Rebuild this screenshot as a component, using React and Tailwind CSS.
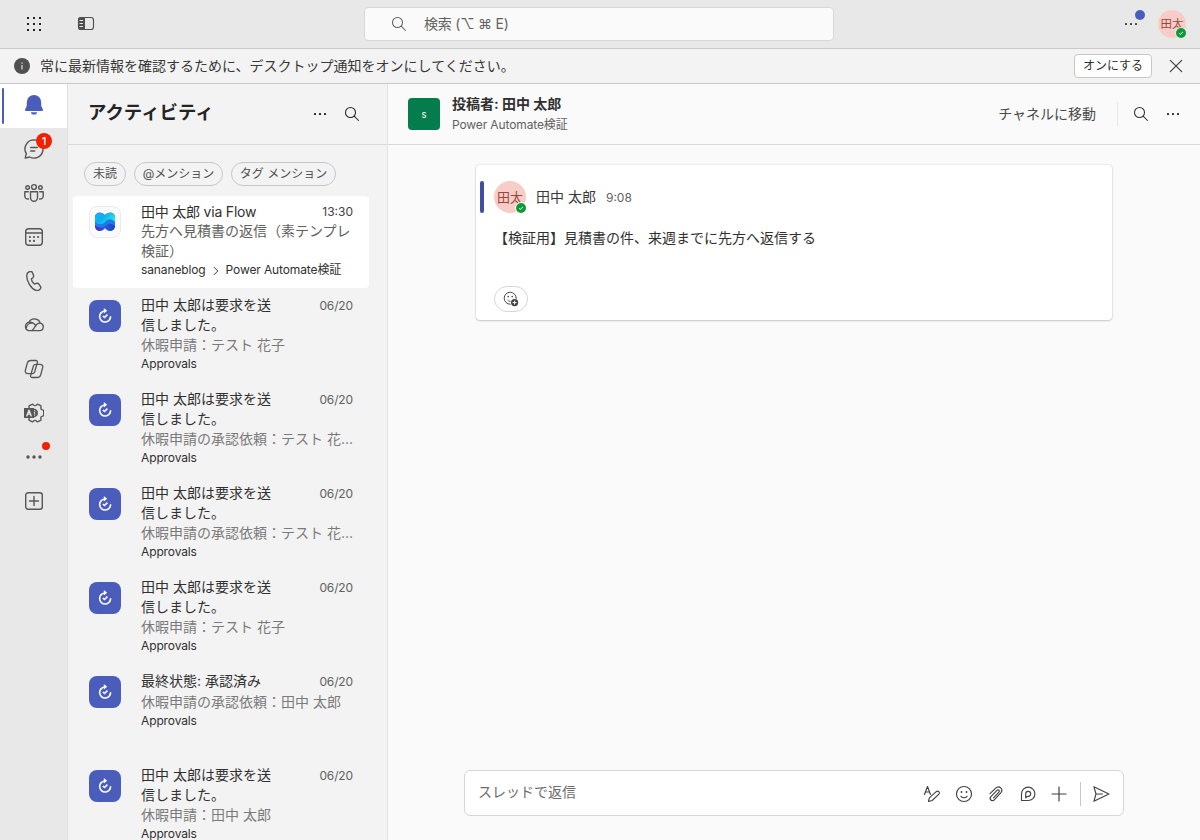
import React from "react";

const items = [
  { title: "田中 太郎は要求を送信しました。", preview: "休暇申請：テスト 花子" },
  { title: "田中 太郎は要求を送信しました。", preview: "休暇申請の承認依頼：テスト 花..." },
  { title: "田中 太郎は要求を送信しました。", preview: "休暇申請の承認依頼：テスト 花..." },
  { title: "田中 太郎は要求を送信しました。", preview: "休暇申請：テスト 花子" },
  { title: "最終状態: 承認済み", preview: "休暇申請の承認依頼：田中 太郎" },
  { title: "田中 太郎は要求を送信しました。", preview: "休暇申請：田中 太郎" },
];

// Line icon on a 20 unit grid
function Icon({ children, className = "h-5 w-5", width = 1.15 }) {
  return (
    <svg
      viewBox="0 0 20 20"
      className={`shrink-0 ${className}`}
      fill="none"
      stroke="currentColor"
      strokeWidth={width}
      strokeLinecap="round"
      strokeLinejoin="round"
    >
      {children}
    </svg>
  );
}

function SearchIcon({ className }) {
  return (
    <Icon className={className} width={1.05}>
      <circle cx="8.5" cy="8.5" r="5" />
      <path d="M12.2 12.2l4.3 4.3" />
    </Icon>
  );
}

function Dots({ className }) {
  return (
    <svg viewBox="0 0 20 20" className={`h-5 w-5 shrink-0 ${className || ""}`} fill="currentColor">
      <rect x="4" y="9" width="2" height="2" rx=".5" />
      <rect x="9" y="9" width="2" height="2" rx=".5" />
      <rect x="14" y="9" width="2" height="2" rx=".5" />
    </svg>
  );
}

function BellIcon() {
  return (
    <svg viewBox="0 0 20 20" className="h-5 w-5 text-[#4a5dbb]" fill="currentColor">
      <path d="M10 0a7.2 7.2 0 0 0-7.2 7.2v3.6L1.1 14.6a1 1 0 0 0 .9 1.4h16a1 1 0 0 0 .9-1.4l-1.7-3.8V7.2A7.2 7.2 0 0 0 10 0z" />
      <path d="M7 17.2h6a3 2.4 0 0 1-6 0z" />
    </svg>
  );
}

function ChatIcon() {
  return (
    <Icon width={1.4}>
      <path d="M10 .9a9.1 9.1 0 1 1-4.4 17.1L1.2 19.1l1.1-4.4A9.1 9.1 0 0 1 10 .9z" />
      <path d="M6.7 8.5h6.6M6.7 12h4" />
    </Icon>
  );
}

function PeopleIcon() {
  return (
    <Icon width={1.4}>
      <circle cx="10" cy="4" r="2.4" />
      <circle cx="3.6" cy="4.5" r="1.8" />
      <circle cx="16.4" cy="4.5" r="1.8" />
      <path d="M6.5 8.7h7v5.8a3.5 3.8 0 0 1-7 0z" />
      <path d="M4.3 8.7H.8v4.6A3 3 0 0 0 4.4 16M15.7 8.7h3.5v4.6a3 3 0 0 1-3.6 2.7" />
    </Icon>
  );
}

function CalendarIcon() {
  return (
    <Icon width={1.4}>
      <rect x="1.7" y="1.7" width="16.6" height="16.6" rx="3" />
      <path d="M1.7 6h16.6" />
      <g fill="currentColor" stroke="none">
        <circle cx="5.9" cy="10" r="1.1" />
        <circle cx="10" cy="10" r="1.1" />
        <circle cx="14.1" cy="10" r="1.1" />
        <circle cx="5.9" cy="13.9" r="1.1" />
        <circle cx="10" cy="13.9" r="1.1" />
      </g>
    </Icon>
  );
}

function PhoneIcon() {
  return (
    <Icon width={1.4}>
      <path d="M4.8 1l1.2-.4c1.200-.3 2.200.2 2.600 1.300l.9 2.300c.3.9.1 1.800-.6 2.500L7.300 8c.2 1.600 1.600 3.900 3 5l2.300-.7c.9-.2 1.800.1 2.300.9l1.500 2.100c.6.9.4 1.900-.2 2.600l-.8.8c-.9.8-2.200 1.100-3.300.7C7 17.700 2.700 10.300 2.700 4.800 2.800 3.200 3.300 1.600 4.800 1z" />
    </Icon>
  );
}

function CloudIcon() {
  return (
    <Icon width={1.3}>
      <path d="M4.800 15.700h10.500a3.800 3.800 0 0 0 1-7.500A6.300 6.300 0 0 0 4.800 7.300a4.300 4.300 0 0 0 0 8.400z" />
      <path d="M2.300 13c.6-3.200 3.100-5.300 6.100-4.900M8 15.500c3.300-2 2.800-7.200 8-7.300M5.500 7.300c3.200-.6 5.200 1.900 6.500 3.600" />
    </Icon>
  );
}

function CopilotIcon() {
  const leaf =
    "M7 1.500h4.800c1.300 0 1.900.8 1.600 2L10.600 13c-.4 1.200-1.200 1.700-2.300 1.700H4c-2 0-3.100-1.400-2.700-3.200l2-7.300C3.800 2.500 5.200 1.500 7 1.500z";
  return (
    <Icon width={1.3}>
      <path d={leaf} />
      <path d={leaf} transform="rotate(180 10 10)" />
    </Icon>
  );
}

function AdminGearIcon() {
  return (
    <Icon width={1.4}>
      <path d="M5.100 6V4.400c-.2-.7-.3-1.400.3-1.700L8 1.300c.5-.3 1-.1 1.400.5.8 1.100 2.400 1.100 3.200 0 .4-.6.9-.8 1.400-.5l2.600 1.400c.6.3.5 1 .3 1.700-.3 1.300.4 2.300 1.700 2.500.9.1 1.100.5 1.100 1v4.200c0 .5-.2.9-1.100 1-1.300.2-2 1.200-1.700 2.500.2.7.3 1.400-.3 1.700L14 18.700c-.5.3-1 .1-1.400-.5-.8-1.100-2.400-1.100-3.200 0-.4.6-.9.800-1.400.5l-2.600-1.400c-.6-.3-.5-1-.3-1.700V14" />
      <path d="M10.500 6.500a3.600 3.600 0 0 1 0 7M11 8.600l2.200 2.800M13.200 8.600L11 11.400" />
      <rect x="0" y="5" width="10" height="10" fill="currentColor" stroke="none" />
      <path d="M2.800 12.900L5 7.200l2.200 5.700M3.600 11.100h2.800" stroke="#e8e8e8" />
    </Icon>
  );
}

function RailMoreIcon() {
  return (
    <svg viewBox="0 0 20 20" className="h-5 w-5" fill="currentColor">
      <circle cx="4" cy="10" r="1.700" />
      <circle cx="10" cy="10" r="1.700" />
      <circle cx="16" cy="10" r="1.700" />
    </svg>
  );
}

function AddAppIcon() {
  return (
    <Icon width={1.4}>
      <rect x="1.700" y="1.700" width="16.600" height="16.600" rx="2.500" />
      <path d="M10 5.500v9M5.500 10h9" />
    </Icon>
  );
}

function RailItem({ active, children }) {
  return (
    <div className={`relative flex h-11 w-full justify-center pt-[11px] text-[#565656] ${active ? "bg-white" : ""}`}>
      {active && <span className="absolute top-1 left-0.5 h-9 w-0.5 rounded-full bg-[#4a5dbb]" />}
      {children}
    </div>
  );
}

function Avatar({ className, small }) {
  return (
    <div className={`relative flex shrink-0 items-center justify-center rounded-full bg-[#f9cdc7] text-[#97483e] ${className}`}>
      <span className={small ? "text-[11.5px] leading-7" : "text-[13px] leading-8"}>田太</span>
      <svg viewBox="0 0 12 12" className="absolute -right-px -bottom-px h-3 w-3">
        <circle cx="6" cy="6" r="6" fill={small ? "#e8e8e8" : "#fff"} />
        <circle cx="6" cy="6" r="5" fill="#0b9a35" />
        <path d="M4 6.100l1.400 1.300 2.600-2.600" fill="none" stroke="#fff" strokeWidth="1" />
      </svg>
    </div>
  );
}

function FlowLogo() {
  return (
    <div className="flex h-8 w-8 shrink-0 items-center justify-center rounded-lg border border-[#ebebeb] bg-[#fafafa]">
      <svg viewBox="0 0 20 20" className="h-5 w-5">
        <defs>
          <linearGradient id="flow-top" x1="0" x2="1" y1="0" y2=".5">
            <stop offset="0" stopColor="#1ab0f4" />
            <stop offset=".5" stopColor="#0bb0f3" />
            <stop offset="1" stopColor="#2fe6d4" />
          </linearGradient>
          <linearGradient id="flow-bottom" x1="0" x2="1" y1="0" y2="0">
            <stop offset="0" stopColor="#4b2fb5" />
            <stop offset=".5" stopColor="#2f56d8" />
            <stop offset="1" stopColor="#1746c4" />
          </linearGradient>
          <clipPath id="flow-shape">
            <path d="M5 .800c2.200 0 3.600 1.200 5 2.400 1.400-1.200 2.800-2.400 5-2.400 3 0 5 2 5 4.700v8.700c0 2.800-2 4.800-5 4.800-2.200 0-3.600-1.200-5-2.800C8.600 17.800 7.200 19 5 19c-3 0-5-2-5-4.800V5.500C0 2.800 2 .8 5 .8z" />
          </clipPath>
        </defs>
        <g clipPath="url(#flow-shape)">
          <path d="M0 0h20v20H0z" fill="url(#flow-bottom)" />
          <path d="M0 0h20v14c-4-3-6-3-9-.500s-7 3-11 0z" fill="#1e78ee" />
          <path d="M0 0h20v10c-4-4-7-3-10 0s-7 3-10 0z" fill="url(#flow-top)" />
        </g>
      </svg>
    </div>
  );
}

function ApprovalLogo() {
  return (
    <div className="flex h-8 w-8 shrink-0 items-center justify-center rounded-lg bg-[#4a5dbb]">
      <svg viewBox="0 0 16 16" className="h-4 w-4" fill="none" stroke="#fff" strokeWidth="1.600">
        <path d="M7.700 3a5.500 5.500 0 1 0 5.900 5.300" />
        <path d="M5.800 8l1.700 1.500 2.900-2.900" />
        <path d="M6.800 0l3.400 2.800-3.400 2.800z" fill="#fff" stroke="none" />
      </svg>
    </div>
  );
}

function Chip({ className, children }) {
  return (
    <div className={`flex h-6 items-center justify-center rounded-full border border-[#c7c7c7] text-xs whitespace-nowrap text-[#505050] ${className}`}>
      <span className="-mt-px">{children}</span>
    </div>
  );
}

function ActivityItem({ item }) {
  return (
    <div className="flex h-[92px] shrink-0 px-4">
      <div className="pt-2.5">
        <ApprovalLogo />
      </div>
      <div className="ml-5 w-[212px] pt-[5px]">
        <div className="flex justify-between text-sm leading-5 text-[#303030]">
          <div className="w-[140px]">{item.title}</div>
          <div className="pt-px text-xs leading-5 tracking-[-0.01em] text-[#616161]">06/20</div>
        </div>
        <div className="text-sm leading-5 whitespace-nowrap text-[#7a7a7a]">{item.preview}</div>
        <div className="pt-px text-xs leading-4 tracking-[-0.01em] text-[#303030]">Approvals</div>
      </div>
    </div>
  );
}

function TopBar() {
  return (
    <header className="flex h-[49px] shrink-0 items-start border-b border-[#c9c9c9] bg-[#e8e8e8] pt-[7px]">
      <div className="flex h-[34px] w-[364px] items-center pl-6">
        <svg viewBox="0 0 20 20" className="h-5 w-5" fill="#242424">
          <path d="M3 3h2v2H3zM9 3h2v2H9zM15 3h2v2h-2zM3 9h2v2H3zM9 9h2v2H9zM15 9h2v2h-2zM3 15h2v2H3zM9 15h2v2H9zM15 15h2v2h-2z" />
        </svg>
        <Icon className="ml-8 h-5 w-5 text-[#505050]">
          <path d="M2 6a3 3 0 0 1 3-3h4v13H5a3 3 0 0 1-3-3z" fill="currentColor" stroke="none" />
          <rect x="2.500" y="3.500" width="15" height="12" rx="2.500" />
          <path d="M4 6.500h2.500M4 9.500h2.500M4 12.500h2.500" stroke="#e8e8e8" />
        </Icon>
      </div>
      <div className="flex h-[34px] w-[470px] items-center rounded border border-[#d8d8d8] bg-[#fafafa] pl-6 text-[#616161]">
        <SearchIcon className="h-5 w-5" />
        <span className="ml-[15px] text-sm tracking-[-0.015em]">検索 (⌥ ⌘ E)</span>
      </div>
      <div className="flex h-[34px] flex-1 items-center justify-end pr-3.5">
        <div className="relative mr-[17px] text-[#424242]">
          <Dots />
          <span className="absolute -top-1 left-3.5 h-2.5 w-2.5 rounded-full bg-[#4a5dbb]" />
        </div>
        <Avatar small className="h-7 w-7" />
      </div>
    </header>
  );
}

function Notice() {
  return (
    <div className="flex h-[35px] shrink-0 items-center border-b border-[#c9c9c9] bg-[#f3f3f3] pl-3.5 text-sm text-[#383838]">
      <svg viewBox="0 0 16 16" className="h-4 w-4">
        <circle cx="8" cy="8" r="8" fill="#505050" />
        <path d="M7.400 7h1.200v4.500H7.400zM7.400 4.500h1.200v1.300H7.400z" fill="#e0e0e0" />
      </svg>
      <span className="-mt-px ml-2.5">常に最新情報を確認するために、デスクトップ通知をオンにしてください。</span>
      <button className="ml-auto h-6 w-[78px] rounded border border-[#c7c7c7] bg-white text-xs text-[#303030]">
        <span>オンにする</span>
      </button>
      <Icon className="mx-3.5 h-5 w-5" width={1.100}>
        <path d="M4.300 4.300l11.400 11.400M15.700 4.300L4.300 15.700" />
      </Icon>
    </div>
  );
}

function Rail() {
  return (
    <nav className="flex w-[68px] shrink-0 flex-col border-r border-[#dedede] bg-[#e8e8e8]">
      <RailItem active>
        <BellIcon />
      </RailItem>
      <RailItem>
        <ChatIcon />
        <span className="absolute top-[5px] left-9 flex h-4 w-4 items-center justify-center rounded-full bg-[#f02000] text-[11px] font-medium text-white">
          1
        </span>
      </RailItem>
      <RailItem><PeopleIcon /></RailItem>
      <RailItem><CalendarIcon /></RailItem>
      <RailItem><PhoneIcon /></RailItem>
      <RailItem><CloudIcon /></RailItem>
      <RailItem><CopilotIcon /></RailItem>
      <RailItem><AdminGearIcon /></RailItem>
      <RailItem>
        <RailMoreIcon />
        <span className="absolute top-1.5 left-[42px] h-2 w-2 rounded-full bg-[#f02000]" />
      </RailItem>
      <RailItem><AddAppIcon /></RailItem>
    </nav>
  );
}

function ActivityPanel() {
  return (
    <aside className="flex w-80 shrink-0 flex-col overflow-hidden border-r border-[#e4e4e4] bg-[#f3f3f3]">
      <div className="flex h-[61px] shrink-0 items-center border-b border-[#d9d9d9] pl-5 text-[#242424]">
        <h1 className="-mt-0.5 text-[18.4px] font-bold">アクティビティ</h1>
        <Dots className="ml-auto" />
        <SearchIcon className="mr-[25px] ml-3 h-5 w-5" />
      </div>
      <div className="flex shrink-0 gap-2 pt-[17px] pl-4">
        <Chip className="w-[42px]">未読</Chip>
        <Chip className="w-[89px]">@メンション</Chip>
        <Chip className="w-[105px]">タグ メンション</Chip>
      </div>
      <div className="mt-2.5 ml-[5px] flex w-[296px] flex-col gap-0.5">
        <div className="flex h-[92px] shrink-0 rounded bg-white pl-4">
          <div className="pt-2.5">
            <FlowLogo />
          </div>
          <div className="ml-5 w-[212px] pt-[5px]">
            <div className="flex justify-between pt-px text-sm leading-5 text-[#303030]">
              <div className="tracking-[-0.015em] whitespace-nowrap">田中 太郎 via Flow</div>
              <div className="text-xs leading-5 text-[#424242]">13:30</div>
            </div>
            <div className="-mt-px text-sm leading-5 text-[#606060]">先方へ見積書の返信（素テンプレ検証）</div>
            <div className="flex items-center pt-px text-xs leading-4 tracking-[-0.01em] text-[#303030]">
              sananeblog
              <Icon className="mx-1 mt-0.5 h-3 w-3" width={1.600}>
                <path d="M7 4l6 6-6 6" />
              </Icon>
              Power Automate検証
            </div>
          </div>
        </div>
        {items.map((item, i) => (
          <ActivityItem key={i} item={item} />
        ))}
      </div>
    </aside>
  );
}

function Composer() {
  return (
    <div className="mx-[76px] mb-6 flex h-[46px] shrink-0 items-center rounded-md border border-[#d6d6d6] bg-white pl-[13px] text-[#424242]">
      <span className="-mt-0.5 text-sm text-[#6b6b6b]">スレッドで返信</span>
      <div className="mt-0.5 ml-auto flex items-center gap-3 pr-3">
        <Icon>
          <path d="M2.500 10.500l3-8 3 8M3.500 8h4" />
          <path d="M6.500 17.500l.9-3.600 6.800-6.200c2-1.500 4.200.6 2.700 2.500L10.200 16.500z" />
        </Icon>
        <Icon>
          <circle cx="10" cy="10" r="7.500" />
          <path d="M7 12.300c1.600 1.900 4.400 1.900 6 0" />
          <circle cx="7.500" cy="8" r=".9" fill="currentColor" stroke="none" />
          <circle cx="12.500" cy="8" r=".9" fill="currentColor" stroke="none" />
        </Icon>
        <Icon>
          <path d="M4 9.700l5.700-5.600c3.500-3.300 8.200 1 5 4.700l-6.400 7c-2.400 2.300-5.600-.7-3.400-3.200l6-6.200c1.500-1.400 3.300.4 2 1.800l-5.400 5.700" />
        </Icon>
        <Icon>
          <path d="M3.500 16.500v-6.700a6.700 6.700 0 1 1 6.700 6.700z" />
          <path d="M7.700 14V9.800a2.500 2.500 0 1 1 2.500 2.500c-1.200 0-2 .6-2.500 1.700z" />
        </Icon>
        <Icon className="-ml-px h-5 w-5" width={1.200}>
          <path d="M10 3v14M3 10h14" />
        </Icon>
        <span className="-ml-px h-6 w-px bg-[#c7c7c7]" />
        <Icon className="-ml-0.5 h-5 w-5">
          <path d="M2.900 2.700l15 7.300-15 7.300L5 10zM5 10h6.500" />
        </Icon>
      </div>
    </div>
  );
}

function Thread() {
  return (
    <main className="flex min-w-0 flex-1 flex-col bg-[#fafafa]">
      <div className="flex h-[61px] shrink-0 items-center border-b border-[#d9d9d9] pl-5 text-[#303030]">
        <div className="flex h-8 w-8 items-center justify-center rounded bg-[#057c4b] pt-0.5 text-[9.500px] text-white">s</div>
        <div className="ml-3">
          <div className="text-sm leading-5 font-bold">投稿者: 田中 太郎</div>
          <div className="pt-px text-xs leading-5 tracking-[-0.01em] text-[#616161]">Power Automate検証</div>
        </div>
        <span className="-mt-px ml-auto text-sm text-[#4a4a4a]">チャネルに移動</span>
        <span className="ml-[21px] h-6 w-px bg-[#e8e8e8]" />
        <SearchIcon className="ml-[13px] h-5 w-5" />
        <Dots className="mr-[17px] ml-3" />
      </div>
      <div className="flex-1">
        <article className="mt-5 ml-[88px] h-[155px] w-[636px] rounded bg-white pt-4 pl-1 shadow-[0_0_2px_rgba(0,0,0,0.18),0_1px_2px_rgba(0,0,0,0.16)]">
          <div className="flex h-8 items-center">
            <span className="h-8 w-1 rounded-sm bg-[#3f4fa3]" />
            <Avatar className="ml-2.5 h-8 w-8" />
            <span className="ml-2.5 text-sm text-[#3a3a3a]">田中 太郎</span>
            <span className="mt-0.5 ml-2.5 text-xs text-[#616161]">9:08</span>
          </div>
          <p className="mt-[15px] ml-3.5 text-sm leading-5 text-[#303030]">【検証用】見積書の件、来週までに先方へ返信する</p>
          <button className="mt-[38px] ml-3.5 flex h-[26px] w-[34px] items-center justify-center rounded-full border border-[#d6d6d6] text-[#424242]">
            <Icon className="h-4 w-4" width={1.200}>
              <circle cx="9" cy="9" r="7.500" />
              <path d="M6 11.500c1.200 1.500 3.200 2 4.500 1.200" />
              <circle cx="6.500" cy="7" r="1" fill="currentColor" stroke="none" />
              <circle cx="11.500" cy="7" r="1" fill="currentColor" stroke="none" />
              <circle cx="14.500" cy="14.500" r="5.500" fill="#fff" stroke="none" />
              <circle cx="14.500" cy="14.500" r="4.500" fill="currentColor" stroke="none" />
              <path d="M14.500 12.500v4M12.500 14.500h4" stroke="#fff" />
            </Icon>
          </button>
        </article>
      </div>
      <Composer />
    </main>
  );
}

export default function App() {
  return (
    <div
      lang="ja"
      className="flex h-[840px] w-[1200px] flex-col overflow-hidden bg-[#fafafa] font-['Inter','Noto_Sans_CJK_JP',sans-serif]"
    >
      <TopBar />
      <Notice />
      <div className="flex min-h-0 flex-1">
        <Rail />
        <ActivityPanel />
        <Thread />
      </div>
    </div>
  );
}
